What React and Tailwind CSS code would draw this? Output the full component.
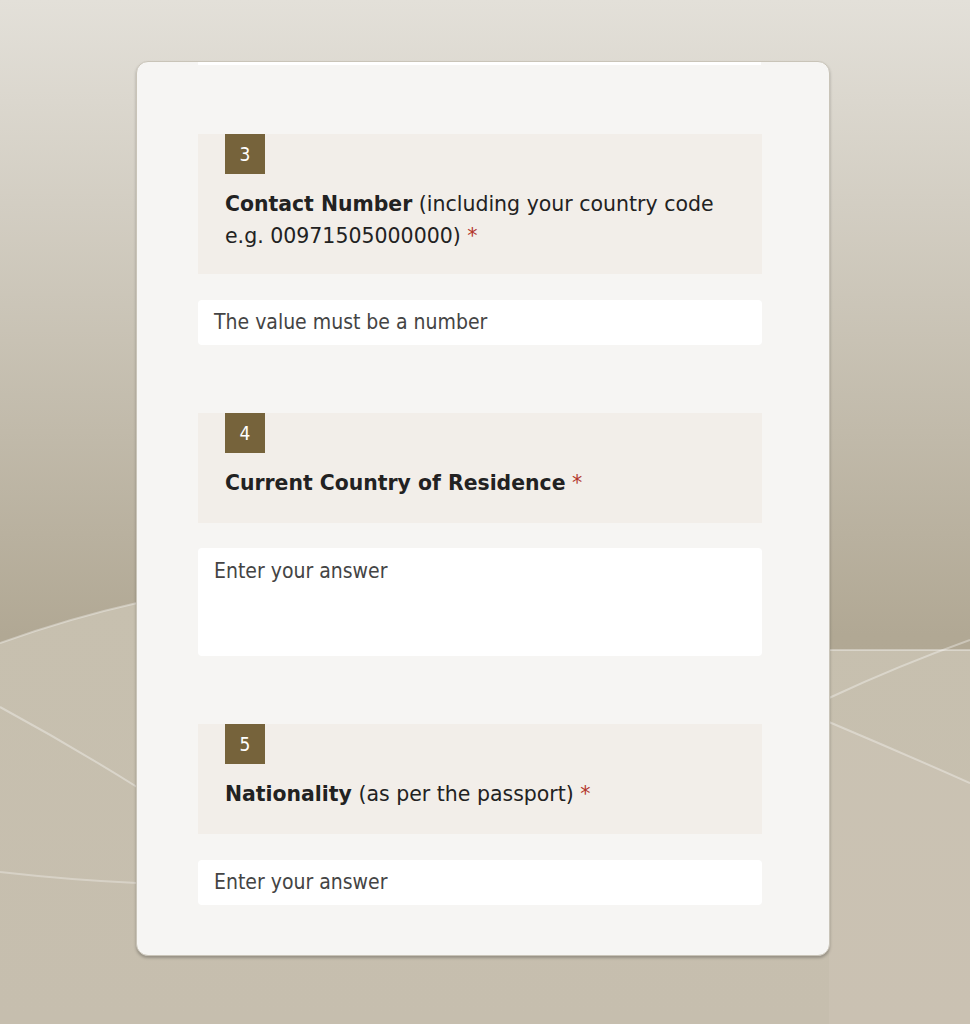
import React from "react";

const font = { fontFamily: '"DejaVu Sans Condensed", "DejaVu Sans", Verdana, sans-serif' };
const headFont = { fontFamily: '"DejaVu Sans", Verdana, sans-serif' };

function Background() {
  return (
    <svg className="absolute inset-0 w-full h-full" viewBox="0 0 970 1024" preserveAspectRatio="none">
      <defs>
        <linearGradient id="top" x1="0" y1="0" x2="0" y2="1">
          <stop offset="0" stopColor="#e3e0d9" />
          <stop offset="0.62" stopColor="#b1a894" />
          <stop offset="1" stopColor="#aea591" />
        </linearGradient>
        <linearGradient id="low" x1="0" y1="0" x2="0" y2="1">
          <stop offset="0" stopColor="#c7c0af" />
          <stop offset="1" stopColor="#c6beae" />
        </linearGradient>
      </defs>
      <rect x="0" y="0" width="970" height="1024" fill="url(#top)" />
      <path d="M0 643 Q 70 618 137 603 C 400 560 600 640 829 650 L 970 650 L 970 1024 L 0 1024 Z" fill="url(#low)" />
      <path d="M0 643 Q 70 618 137 603 C 400 560 600 640 829 650 L 970 650" fill="none" stroke="#ffffff" strokeOpacity="0.35" strokeWidth="2" />
      <path d="M0 707 Q 70 745 137 787" fill="none" stroke="#ffffff" strokeOpacity="0.35" strokeWidth="2" />
      <path d="M829 698 Q 900 665 970 640" fill="none" stroke="#ffffff" strokeOpacity="0.35" strokeWidth="2" />
      <path d="M829 722 Q 900 752 970 783 L 970 1024 L 829 1024 Z" fill="#d0c9bb" fillOpacity="0.35" />
      <path d="M829 722 Q 900 752 970 783" fill="none" stroke="#ffffff" strokeOpacity="0.35" strokeWidth="2" />
      <path d="M0 872 Q 70 880 137 883" fill="none" stroke="#ffffff" strokeOpacity="0.3" strokeWidth="2" />
    </svg>
  );
}

function Question({ num, tight, children }) {
  return (
    <div className={tight ? "bg-[#f2eee9] pl-[27px] pr-6 pb-[22px]" : "bg-[#f2eee9] pl-[27px] pr-6 pb-6"}>
      <div className="w-10 h-10 bg-[#76633b] text-white flex items-center justify-center text-[19px]" style={font}>{num}</div>
      <div className="mt-[14px] text-[20.5px] leading-[32px] text-[#222]" style={headFont}>{children}</div>
    </div>
  );
}

const Star = () => <span className="text-[#b3362c]"> *</span>;
const B = ({ children }) => <span className="font-bold text-[20.4px]">{children}</span>;

export default function App() {
  return (
    <div className="relative min-h-[1024px] w-full overflow-hidden" style={font}>
      <Background />
      <div className="relative pt-[61px] pl-[136px]">
        <div className="w-[694px] h-[895px] rounded-[12px] bg-[#f6f5f3] border border-[#c9c4b8] shadow-[0_2px_3px_rgba(0,0,0,0.25)] pl-[61px] pr-[67px] pb-[50px]">
          <div className="h-[3px] bg-white mr-[1px]" />
          <div className="h-[69px]" />

          <Question num="3" tight>
            <B>Contact Number</B> (including your country code e.g. 00971505000000)
            <Star />
          </Question>
          <div className="mt-[26px] h-[45px] bg-white rounded-[4px] pl-4 flex items-center text-[21px] text-[#444]">
            The value must be a number
          </div>

          <div className="mt-[68px]">
            <Question num="4">
              <B>Current Country of Residence</B>
              <Star />
            </Question>
          </div>
          <div className="mt-[25px] h-[108px] bg-white rounded-[4px] pl-4 pt-[10px] text-[21px] leading-[26px] text-[#444]">
            Enter your answer
          </div>

          <div className="mt-[68px]">
            <Question num="5">
              <B>Nationality</B> (as per the passport)
              <Star />
            </Question>
          </div>
          <div className="mt-[26px] h-[45px] bg-white rounded-[4px] pl-4 flex items-center text-[21px] text-[#444]">
            Enter your answer
          </div>
        </div>
      </div>
    </div>
  );
}
